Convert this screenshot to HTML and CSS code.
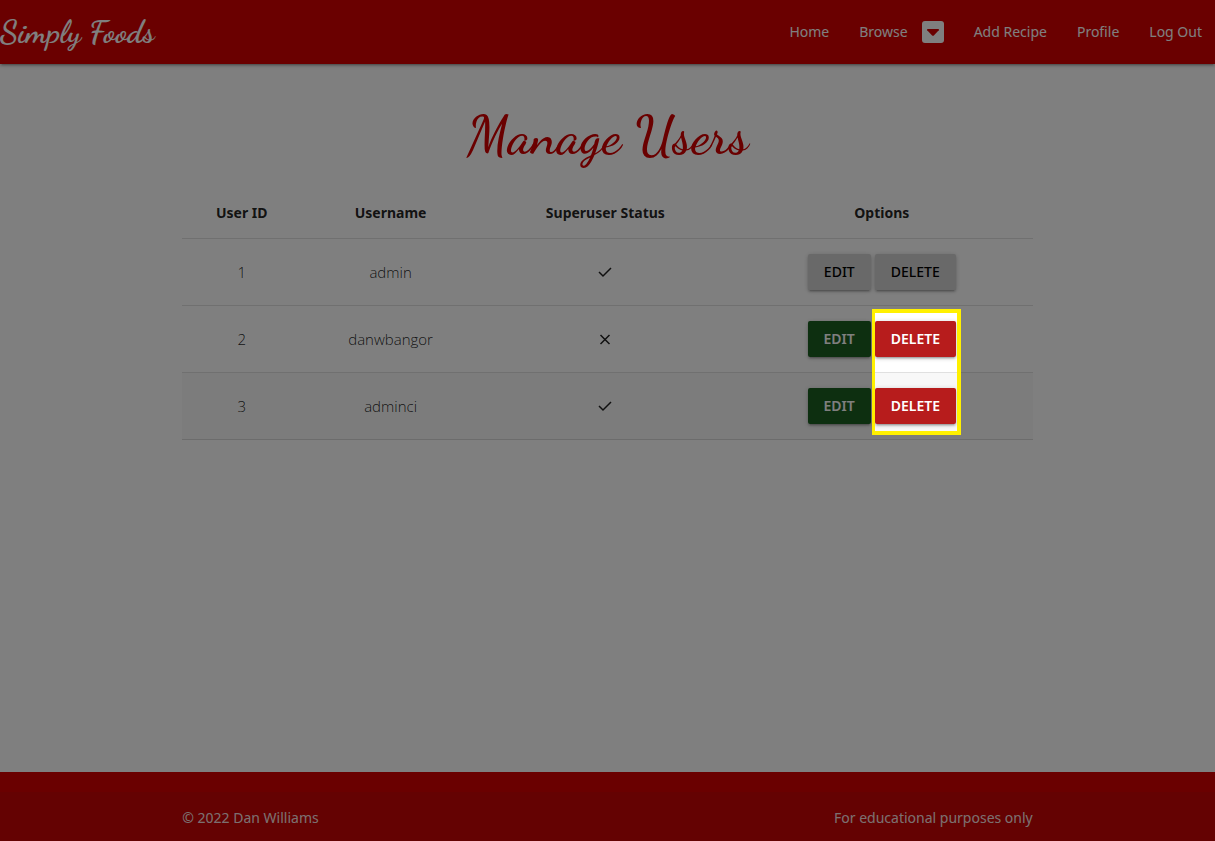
FILE: index.html
```html
<!DOCTYPE html>
<html lang="en">
<head>
<meta charset="utf-8">
<meta name="viewport" content="width=device-width, initial-scale=1">
<title>Simply Foods - Manage Users</title>
<link rel="stylesheet" href="styles.css">
</head>
<body>
<header class="navbar">
  <a class="brand" href="#">Simply Foods</a>
  <nav class="nav-links">
    <a href="#">Home</a>
    <a href="#" class="browse">Browse
      <svg class="caret" viewBox="0 0 22 22" aria-hidden="true"><rect width="22" height="22" rx="3" fill="#fff"/><path d="M5.6 8h10.8q1 .4.4 1.300l-4.700 5q-1.100 1-2.200 0l-4.700-5q-.6-.9.4-1.300z" fill="#d50000"/></svg>
    </a>
    <a href="#">Add Recipe</a>
    <a href="#">Profile</a>
    <a href="#">Log Out</a>
  </nav>
</header>
<main class="container">
  <h1 class="title">Manage Users</h1>
  <table class="users">
    <colgroup><col class="col-id"><col class="col-name"><col class="col-status"><col class="col-options"></colgroup>
    <thead>
      <tr><th>User ID</th><th>Username</th><th>Superuser Status</th><th>Options</th></tr>
    </thead>
    <tbody>
      <tr>
        <td>1</td><td>admin</td>
        <td><svg class="mark" viewBox="0 0 16 16" role="img" aria-label="Yes"><path d="M2 8l4 4 8-8"/></svg></td>
        <td><div class="options"><button class="btn" disabled>Edit</button><button class="btn" disabled>Delete</button></div></td>
      </tr>
      <tr>
        <td>2</td><td>danwbangor</td>
        <td><svg class="mark" viewBox="0 0 16 16" role="img" aria-label="No"><path d="M3.500 4l9 9M12.500 4l-9 9"/></svg></td>
        <td><div class="options"><button class="btn edit">Edit</button><span class="focus-anchor"><button class="btn delete">Delete</button><span class="spotlight"></span></span></div></td>
      </tr>
      <tr class="hovered">
        <td>3</td><td>adminci</td>
        <td><svg class="mark" viewBox="0 0 16 16" role="img" aria-label="Yes"><path d="M2 8l4 4 8-8"/></svg></td>
        <td><div class="options"><button class="btn edit">Edit</button><button class="btn delete">Delete</button></div></td>
      </tr>
    </tbody>
  </table>
</main>
<footer class="footer">
  <div class="copyright">
    <div class="container footer-row"><span>© 2022 Dan Williams</span><span>For educational purposes only</span></div>
  </div>
</footer>
</body>
</html>
```
FILE: styles.css
```css
* { box-sizing: border-box; }

body {
  margin: 0;
  min-height: 100vh;
  display: flex;
  flex-direction: column;
  overflow-x: hidden;
  background: #fff;
  color: rgba(0, 0, 0, 0.87);
  font-family: "Segoe UI", "Noto Sans", "Open Sans", sans-serif;
  font-size: 14px;
  line-height: 22px;
}

.navbar {
  display: flex;
  align-items: center;
  justify-content: space-between;
  height: 64px;
  background: #d50000;
  color: #fff;
  box-shadow: 0 2px 2px rgba(0, 0, 0, 0.14), 0 3px 1px -2px rgba(0, 0, 0, 0.12), 0 1px 5px rgba(0, 0, 0, 0.2);
}

.navbar a { color: inherit; text-decoration: none; }

.brand,
.title { font-family: "Dancing Script", cursive; }

.brand { font-size: 32px; font-weight: 700; line-height: 64px; }

.nav-links {
  display: flex;
  align-items: center;
  gap: 30px;
  padding-right: 13px;
}

.browse { display: flex; align-items: center; gap: 14px; }
.caret { width: 22px; height: 22px; }

.container { width: 70%; margin: 0 auto; }

main { flex: 1; }

.title {
  margin: 40px 0 19px;
  color: #d50000;
  font-size: 54px;
  font-weight: 600;
  line-height: 64px;
  text-align: center;
}

.users {
  width: 100%;
  table-layout: fixed;
  border-collapse: collapse;
  text-align: center;
}

.col-id { width: 14%; }
.col-name { width: 21%; }
.col-status { width: 29.5%; }
.col-options { width: 35.5%; }

.users tr { border-bottom: 1px solid rgba(0, 0, 0, 0.12); }
.users th { padding: 15px 5px 14px; font-weight: 700; }
.users td { padding: 15px 5px; font-family: "Segoe UI", "Open Sans", sans-serif; font-size: 15px; font-weight: 300; }
.hovered { background: #f8f8f8; }

.mark {
  display: block;
  width: 16px;
  height: 16px;
  margin: 0 auto;
  fill: none;
  stroke: #212121;
  stroke-width: 1.500;
}

.options { display: flex; justify-content: center; gap: 4px; }

.btn {
  height: 36px;
  padding: 0 16px;
  border: 0;
  border-radius: 2px;
  background: #d3d3d3;
  color: #000;
  font-family: "Segoe UI", "Noto Sans", sans-serif;
  font-size: 14px;
  font-weight: 500;
  line-height: 36px;
  text-transform: uppercase;
  box-shadow: 0 2px 2px rgba(0, 0, 0, 0.14), 0 3px 1px -2px rgba(0, 0, 0, 0.12), 0 1px 5px rgba(0, 0, 0, 0.2);
}

.edit,
.delete { color: #fff; font-weight: 600; }
.edit { background: #1b5e20; }
.delete { background: #b71c1c; }

.focus-anchor { position: relative; }

/* Dims the page around the framed delete buttons */
.spotlight {
  position: absolute;
  z-index: 10;
  top: -12px;
  left: -3px;
  right: -5px;
  height: 126px;
  border: 4px solid #fff000;
  border-left-width: 3px;
  box-shadow: 0 0 0 9999px rgba(0, 0, 0, 0.5);
  pointer-events: none;
}

.footer { padding-top: 20px; background: #d50000; color: #fff; }
.copyright { padding: 15px 0 12px; background: rgba(51, 51, 51, 0.08); color: rgba(255, 255, 255, 0.9); }
.footer-row { display: flex; justify-content: space-between; }
```
